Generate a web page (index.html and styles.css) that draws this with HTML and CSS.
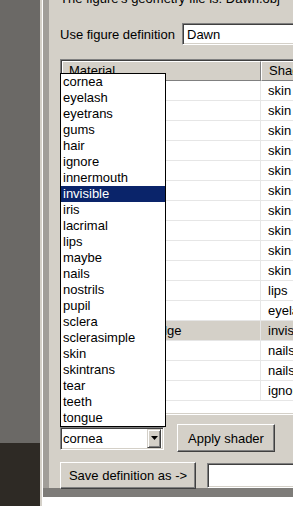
FILE: index.html
```html
<!DOCTYPE html>
<html lang="en">
<head>
    <meta charset="UTF-8">
    <meta name="viewport" content="width=device-width, initial-scale=1.0">
    <title>Figure Shaders</title>
    <link rel="stylesheet" href="styles.css">
</head>
<body>
    <div class="desk">
        <div class="desk-top"></div>
        <div class="desk-bottom"></div>
    </div>

    <div class="window">
        <div class="frame">
            <div class="panel">
                <div class="geom">The figure's geometry file is: Dawn.obj</div>

                <div class="figrow">
                    <span class="label">Use figure definition</span>
                    <div class="field fig-field">Dawn</div>
                </div>

                <!-- Material / shader table -->
                <div class="table">
                    <div class="table-inner">
                        <div class="thead">
                            <div class="th mat">Material</div>
                            <div class="th shd">Shader</div>
                        </div>
                        <div class="tbody">
                            <div class="tr"><div class="td mat">Torso</div><div class="td shd">skin</div></div>
                            <div class="tr"><div class="td mat">Arms</div><div class="td shd">skin</div></div>
                            <div class="tr"><div class="td mat">Legs</div><div class="td shd">skin</div></div>
                            <div class="tr"><div class="td mat">Head</div><div class="td shd">skin</div></div>
                            <div class="tr"><div class="td mat">Face</div><div class="td shd">skin</div></div>
                            <div class="tr"><div class="td mat">Ears</div><div class="td shd">skin</div></div>
                            <div class="tr"><div class="td mat">Neck</div><div class="td shd">skin</div></div>
                            <div class="tr"><div class="td mat">Hands</div><div class="td shd">skin</div></div>
                            <div class="tr"><div class="td mat">Feet</div><div class="td shd">skin</div></div>
                            <div class="tr"><div class="td mat">Nipples</div><div class="td shd">skin</div></div>
                            <div class="tr"><div class="td mat">Lips</div><div class="td shd">lips</div></div>
                            <div class="tr"><div class="td mat">Eyelashes</div><div class="td shd">eyelash</div></div>
                            <div class="tr selected"><div class="td mat">Eyelash_Eye_Edge</div><div class="td shd">invisible</div></div>
                            <div class="tr"><div class="td mat">Fingernails</div><div class="td shd">nails</div></div>
                            <div class="tr"><div class="td mat">Toenails</div><div class="td shd">nails</div></div>
                            <div class="tr"><div class="td mat">Preview</div><div class="td shd">ignore</div></div>
                        </div>
                    </div>
                </div>

                <div class="controls">
                    <div class="combo">
                        <!-- open dropdown of the combo box -->
                        <ul class="droplist">
                            <li>cornea</li>
                            <li>eyelash</li>
                            <li>eyetrans</li>
                            <li>gums</li>
                            <li>hair</li>
                            <li>ignore</li>
                            <li>innermouth</li>
                            <li class="active">invisible</li>
                            <li>iris</li>
                            <li>lacrimal</li>
                            <li>lips</li>
                            <li>maybe</li>
                            <li>nails</li>
                            <li>nostrils</li>
                            <li>pupil</li>
                            <li>sclera</li>
                            <li>sclerasimple</li>
                            <li>skin</li>
                            <li>skintrans</li>
                            <li>tear</li>
                            <li>teeth</li>
                            <li>tongue</li>
                        </ul>
                        <span class="combo-text">cornea</span>
                        <span class="combo-btn">
                            <svg width="7" height="4" viewBox="0 0 7 4"><path d="M0 0h7L3.5 4z" fill="#000"/></svg>
                        </span>
                    </div>
                    <button class="btn apply">Apply shader</button>
                </div>

                <div class="saverow">
                    <button class="btn save">Save definition as -&gt;</button>
                    <div class="field save-field"></div>
                </div>
            </div>
        </div>
    </div>
</body>
</html>
```

FILE: styles.css
```css
body {
    margin: 0;
    height: 506px;
    overflow: hidden;
    display: flex;
    font-family: "Liberation Sans", Arial, sans-serif;
    font-size: 13px;
    color: #000;
}

.desk {
    width: 40px;
    flex-shrink: 0;
    display: flex;
    flex-direction: column;
}

.desk-top {
    height: 443px;
    background-color: #6b6966;
}

.desk-bottom {
    flex: 1;
    background-color: #2e2a25;
}

.window {
    width: 400px;
    flex-shrink: 0;
    border-left: 2px solid #d4d0c8;
}

.frame {
    height: 506px;
    box-sizing: border-box;
    border-left: 1px solid #fff;
    padding-bottom: 9px;
    background-color: #7e7c79;
}

.panel {
    height: 100%;
    box-sizing: border-box;
    border-left: 6px solid #a19e99;
    padding-left: 11px;
    background-color: #d4d0c8;
}

.geom {
    margin-top: -9px;
    line-height: 15px;
    white-space: nowrap;
}

.figrow {
    display: flex;
    align-items: center;
    margin-top: 17px;
}

.label {
    width: 122px;
    white-space: nowrap;
}

.field {
    height: 22px;
    box-sizing: border-box;
    background-color: #fff;
    border: 1px solid;
    border-color: #808080 #fff #fff #808080;
    box-shadow: inset 1px 1px #404040, inset -1px -1px #d4d0c8;
    padding: 3px 0 0 4px;
    line-height: 15px;
}

.fig-field {
    width: 200px;
}

/* table */
.table {
    margin-top: 14px;
    width: 300px;
    border: 1px solid;
    border-color: #808080 #fff #fff #808080;
}

.table-inner {
    border: 1px solid;
    border-color: #404040 #d4d0c8 #d4d0c8 #404040;
    background-color: #fff;
}

.thead {
    display: flex;
    height: 20px;
}

.th {
    box-sizing: border-box;
    background-color: #d4d0c8;
    border: 1px solid;
    border-color: #fff #808080 #808080 #fff;
    padding-left: 6px;
    line-height: 17px;
    white-space: nowrap;
}

.th.mat,
.td.mat {
    width: 199px;
    flex-shrink: 0;
}

.th.shd,
.td.shd {
    flex: 1;
}

.th.shd {
    padding-left: 7px;
}

.tbody {
    height: 332px;
}

.tr {
    display: flex;
    height: 20px;
    box-sizing: border-box;
    border-bottom: 1px solid #e6e6e6;
}

.tr.selected {
    background-color: #d4d0c8;
}

.td {
    box-sizing: border-box;
    padding-left: 6px;
    line-height: 19px;
    white-space: nowrap;
}

.td.shd {
    padding-left: 7px;
}

.td.mat {
    border-right: 1px solid #e6e6e6;
}

/* combo + buttons */
.controls {
    display: flex;
    align-items: center;
    margin-top: 9px;
    gap: 13px;
}

.combo {
    position: relative;
    width: 104px;
    height: 23px;
    box-sizing: border-box;
    display: flex;
    align-items: center;
    justify-content: space-between;
    background-color: #fff;
    border: 1px solid;
    border-color: #808080 #fff #fff #808080;
    box-shadow: inset 1px 1px #404040, inset -1px -1px #d4d0c8;
    padding: 1px 2px 1px 2px;
}

.combo-text {
    line-height: 17px;
}

.combo-btn {
    width: 14px;
    height: 19px;
    box-sizing: border-box;
    display: flex;
    align-items: center;
    justify-content: center;
    background-color: #d4d0c8;
    border: 1px solid;
    border-color: #d4d0c8 #404040 #404040 #d4d0c8;
    box-shadow: inset 1px 1px #fff, inset -1px -1px #808080;
}

.droplist {
    position: absolute;
    left: -1px;
    bottom: 100%;
    width: 106px;
    margin: 0 0 1px 0;
    padding: 0;
    list-style: none;
    box-sizing: border-box;
    border: 1px solid #000;
    background-color: #fff;
}

.droplist li {
    height: 16px;
    line-height: 16px;
    padding-left: 2px;
}

.droplist li.active {
    background-color: #0a246a;
    color: #fff;
}

.btn {
    font-family: inherit;
    font-size: 13px;
    color: #000;
    background-color: #d4d0c8;
    border: 1px solid;
    border-color: #fff #404040 #404040 #fff;
    box-shadow: inset -1px -1px #808080, inset 1px 1px #d4d0c8;
    padding: 0;
}

.apply {
    width: 98px;
    height: 28px;
}

.saverow {
    display: flex;
    align-items: center;
    margin-top: 10px;
    gap: 11px;
}

.save {
    width: 136px;
    height: 27px;
}

.save-field {
    width: 120px;
    height: 25px;
}
```
